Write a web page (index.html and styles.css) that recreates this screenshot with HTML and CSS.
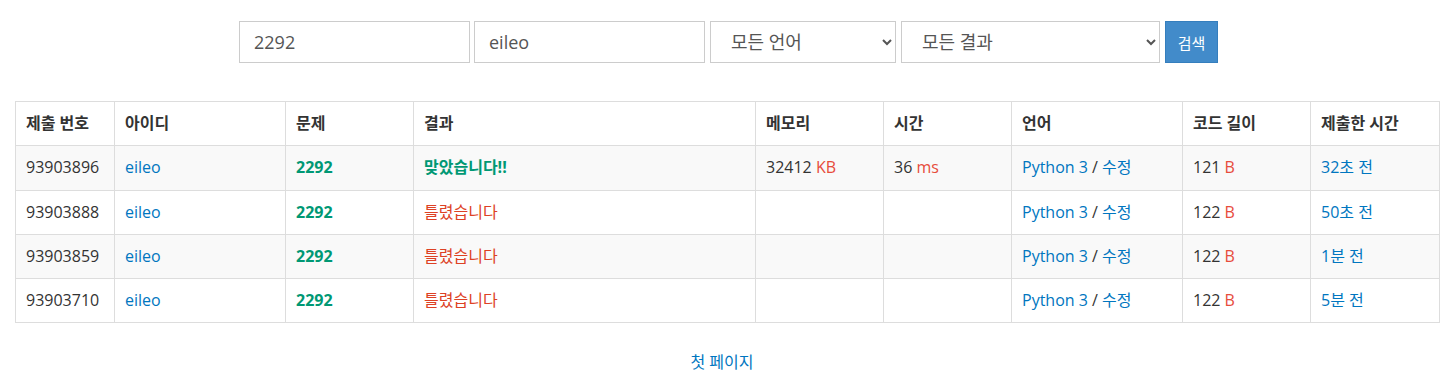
FILE: index.html
```html
<!DOCTYPE html>
<html lang="ko">
<head>
<meta charset="UTF-8">
<meta name="viewport" content="width=device-width, initial-scale=1.0">
<title>채점 현황</title>
<link rel="stylesheet" href="styles.css">
</head>
<body>
    <form class="search" name="statusForm">
        <input type="text" class="field field-problem" name="problem_id" value="2292">
        <input type="text" class="field field-user" name="user_id" value="eileo">
        <select class="field field-lang" name="language_id">
            <option>모든 언어</option>
        </select>
        <select class="field field-result" name="result_id">
            <option>모든 결과</option>
        </select>
        <button type="submit" class="btn-search">검색</button>
    </form>

    <table class="status">
        <colgroup>
            <col style="width: 99px">
            <col style="width: 171px">
            <col style="width: 128px">
            <col style="width: 342px">
            <col style="width: 128px">
            <col style="width: 128px">
            <col style="width: 171px">
            <col style="width: 128px">
            <col style="width: 129px">
        </colgroup>
        <thead>
            <tr>
                <th>제출 번호</th>
                <th>아이디</th>
                <th>문제</th>
                <th>결과</th>
                <th>메모리</th>
                <th>시간</th>
                <th>언어</th>
                <th>코드 길이</th>
                <th>제출한 시간</th>
            </tr>
        </thead>
        <tbody>
            <tr>
                <td>93903896</td>
                <td><a href="#">eileo</a></td>
                <td><a href="#" class="problem">2292</a></td>
                <td><span class="result-ac">맞았습니다!!</span></td>
                <td>32412 <span class="unit">KB</span></td>
                <td>36 <span class="unit">ms</span></td>
                <td><a href="#">Python 3</a> / <a href="#">수정</a></td>
                <td>121 <span class="unit">B</span></td>
                <td><a href="#">32초 전</a></td>
            </tr>
            <tr>
                <td>93903888</td>
                <td><a href="#">eileo</a></td>
                <td><a href="#" class="problem">2292</a></td>
                <td><span class="result-wa">틀렸습니다</span></td>
                <td></td>
                <td></td>
                <td><a href="#">Python 3</a> / <a href="#">수정</a></td>
                <td>122 <span class="unit">B</span></td>
                <td><a href="#">50초 전</a></td>
            </tr>
            <tr>
                <td>93903859</td>
                <td><a href="#">eileo</a></td>
                <td><a href="#" class="problem">2292</a></td>
                <td><span class="result-wa">틀렸습니다</span></td>
                <td></td>
                <td></td>
                <td><a href="#">Python 3</a> / <a href="#">수정</a></td>
                <td>122 <span class="unit">B</span></td>
                <td><a href="#">1분 전</a></td>
            </tr>
            <tr>
                <td>93903710</td>
                <td><a href="#">eileo</a></td>
                <td><a href="#" class="problem">2292</a></td>
                <td><span class="result-wa">틀렸습니다</span></td>
                <td></td>
                <td></td>
                <td><a href="#">Python 3</a> / <a href="#">수정</a></td>
                <td>122 <span class="unit">B</span></td>
                <td><a href="#">5분 전</a></td>
            </tr>
        </tbody>
    </table>

    <div class="pager">
        <a href="#">첫 페이지</a>
    </div>
</body>
</html>
```

FILE: styles.css
```css
body {
    margin: 0;
    font-family: "Open Sans", "Noto Sans CJK KR", sans-serif;
    font-size: 16px;
    color: #333;
    background: #fff;
}
a {
    color: #0076c0;
    text-decoration: none;
}
.search {
    display: flex;
    justify-content: center;
    gap: 4px;
    margin: 21px 0 0 0;
    padding-left: 5px;
}
.field {
    box-sizing: border-box;
    height: 42px;
    border: 1px solid #ccc;
    border-radius: 0;
    background-color: #fff;
    color: #555;
    font-family: "Open Sans", "Noto Sans CJK KR", sans-serif;
    font-size: 18px;
    padding: 0 14px;
    outline: none;
}
.field-problem,
.field-user {
    width: 231px;
}
.field-lang {
    width: 186px;
    margin-left: 1px;
    padding-left: 16px;
    padding-right: 8px;
}
.field-result {
    width: 259px;
    margin-left: 1px;
    padding-left: 16px;
    padding-right: 8px;
}
.btn-search {
    box-sizing: border-box;
    height: 42px;
    width: 53px;
    margin-left: 1px;
    border: 1px solid #357ebd;
    border-radius: 0;
    background-color: #428bca;
    color: #fff;
    font-family: "Open Sans", "Noto Sans CJK KR", sans-serif;
    font-size: 15px;
    cursor: pointer;
}
.status {
    width: 1424px;
    margin: 38px 0 0 15px;
    border-collapse: collapse;
    table-layout: fixed;
    border: 1px solid #ddd;
}
.status th,
.status td {
    border: 1px solid #ddd;
    padding: 10px 10px;
    line-height: 23.25px;
    text-align: left;
    white-space: nowrap;
}
.status th {
    font-weight: bold;
}
.status tbody tr:nth-child(odd) {
    background-color: #f9f9f9;
}
.problem {
    color: #009874;
    font-weight: bold;
}
.result-ac {
    color: #009874;
    font-weight: bold;
}
.result-wa {
    color: #dd4124;
}
.unit {
    color: #e74c3c;
}
.pager {
    text-align: center;
    margin-top: 26px;
    padding-right: 8px;
}
```
